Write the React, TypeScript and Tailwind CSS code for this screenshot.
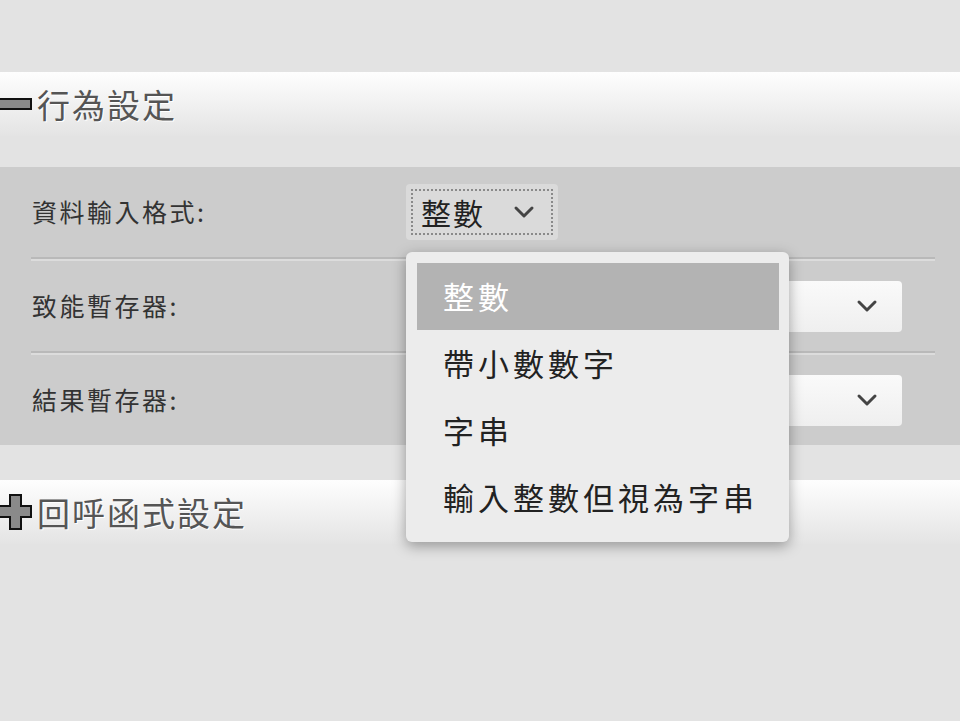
import React from 'react';

const font = { fontFamily: '"Noto Sans CJK TC", "Noto Sans", sans-serif' };

const Chevron: React.FC = () => (
  <svg width="22" height="14" viewBox="0 0 22 14" fill="none">
    <polyline points="3,3 11,11 19,3" stroke="#444" strokeWidth="3" strokeLinecap="round" strokeLinejoin="round" />
  </svg>
);

const MinusIcon: React.FC = () => (
  <svg width="32" height="12" viewBox="0 0 32 12">
    <rect x="-2" y="1" width="33" height="10" fill="#8a8a8a" stroke="#111" strokeWidth="2" />
  </svg>
);

const PlusIcon: React.FC = () => (
  <svg width="32" height="36" viewBox="0 0 32 36">
    <path d="M10 1 H21 V12 H31 V23 H21 V35 H10 V23 H-1 V12 H10 Z" fill="#8a8a8a" stroke="#111" strokeWidth="2" />
  </svg>
);

const SectionHeader: React.FC<{ title: string; open: boolean }> = ({ title, open }) => (
  <div className="h-[64px] flex items-center gap-[5px] bg-linear-to-b from-[#fefefe] to-[#e4e4e4]">
    {open ? <MinusIcon /> : <PlusIcon />}
    <span className="text-[33px] tracking-[2px] text-[#555] [text-shadow:1px_1px_0_#fff] leading-none">{title}</span>
  </div>
);

const options = ['整數', '帶小數數字', '字串', '輸入整數但視為字串'];

const Row: React.FC<{ label: string; children: React.ReactNode }> = ({ label, children }) => (
  <div className="h-[90px] flex items-center">
    <div className="w-[375px] pl-[1px] text-[25px] tracking-[2.5px] text-[#333]">{label}</div>
    {children}
  </div>
);

const Divider: React.FC = () => (
  <div className="h-[4px] border-t-2 border-[#b9b9b9] bg-[#dcdcdc]" />
);

const PlainSelect: React.FC = () => (
  <div className="w-[496px] h-[51px] rounded-[4px] bg-linear-to-b from-[#fafafa] to-[#efefef] flex items-center justify-end pr-[24px]">
    <Chevron />
  </div>
);

export default function App() {
  return (
    <div className="min-h-[721px] bg-[#e3e3e3] pt-[72px]" style={font}>
      <SectionHeader title="行為設定" open />
      <div className="mt-[31px] bg-[#cccccc] pl-[31px] pr-[25px]">
        <Row label="資料輸入格式:">
          <div className="relative">
            <div className="w-[152px] h-[56px] rounded-[4px] bg-[#dadada] p-[5px]">
              <div className="h-full border-2 border-dotted border-[#8a8a8a] flex items-center pl-[8px] pr-[16px] justify-between">
                <span className="text-[30px] tracking-[2px] text-[#222] leading-none">整數</span>
                <Chevron />
              </div>
            </div>
            <div className="absolute top-[68px] left-0 z-10 w-[383px] rounded-[6px] bg-[#ececec] p-[11px] pr-[10px] shadow-[0_4px_14px_rgba(0,0,0,0.35)]">
              {options.map((o, i) => (
                <div
                  key={o}
                  className={
                    i === 0
                      ? 'h-[67px] flex items-center pl-[26px] bg-[#b3b3b3] text-white text-[31px] tracking-[4px]'
                      : 'h-[67px] flex items-center pl-[26px] text-[#222] text-[31px] tracking-[4px]'
                  }
                >
                  {o}
                </div>
              ))}
            </div>
          </div>
        </Row>
        <Divider />
        <Row label="致能暫存器:">
          <PlainSelect />
        </Row>
        <Divider />
        <Row label="結果暫存器:">
          <PlainSelect />
        </Row>
      </div>
      <div className="mt-[35px]">
        <SectionHeader title="回呼函式設定" open={false} />
      </div>
    </div>
  );
}
